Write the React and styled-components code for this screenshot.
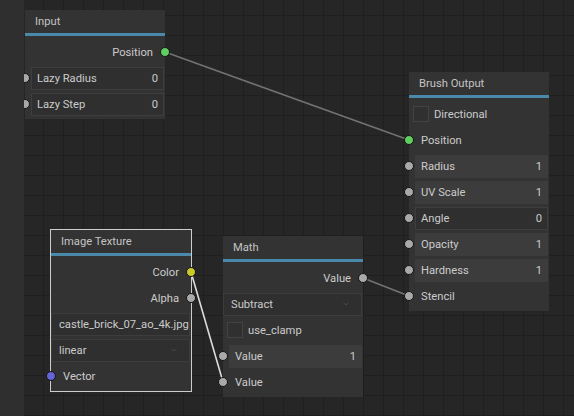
import React from 'react';
import styled, { createGlobalStyle } from 'styled-components';

const GlobalStyle = createGlobalStyle`
  html, body { margin: 0; padding: 0; background: #252525; }
  body { font-family: Roboto, "Liberation Sans", sans-serif; }
  * { box-sizing: border-box; }
`;

const Screen = styled.div`
  display: flex;
  width: 574px;
  height: 416px;
  overflow: hidden;
`;

const Sidebar = styled.aside`
  flex: none;
  width: 24px;
  background: #2f2f2f;
`;

const Canvas = styled.main`
  position: relative;
  flex: 1;
  overflow: hidden;
  background-color: #262626;
  background-image:
    linear-gradient(to right, #1f1f1f 1px, transparent 1px),
    linear-gradient(to bottom, #1f1f1f 1px, transparent 1px);
  background-size: 20px 20px;
  background-position: 19px 15px;
`;

const Links = styled.svg`
  position: absolute;
  inset: 0;
  width: 100%;
  height: 100%;
`;

const NodeBox = styled.section`
  position: absolute;
  left: ${(p) => p.$x}px;
  top: ${(p) => p.$y}px;
  width: ${(p) => (p.$selected ? 142 : 140)}px;
  background: #333333;
  border: ${(p) => (p.$selected ? '1px solid #cdcdcd' : 'none')};
  padding-bottom: 2px;
  color: #cbcbcb;
  font-size: 11.2px;
`;

const Header = styled.header`
  height: 23px;
  display: flex;
  align-items: center;
  padding-left: 10px;
  color: #c4c4c4;
`;

const Bar = styled.div`
  height: 3px;
  background: #4b89aa;
`;

const Body = styled.div`
  display: flex;
  flex-direction: column;
  padding-top: 3px;
`;

const Row = styled.div`
  position: relative;
  height: 26px;
  display: flex;
  align-items: center;
  justify-content: ${(p) => (p.$out ? 'flex-end' : 'flex-start')};
  padding: ${(p) => p.$pad || '0 12px'};
  white-space: nowrap;
`;

const Socket = styled.span`
  position: absolute;
  top: 50%;
  ${(p) => (p.$out ? 'right: -5px;' : 'left: -5px;')}
  width: 10px;
  height: 10px;
  margin-top: -5px;
  border-radius: 50%;
  border: 1px solid #141414;
  background: ${(p) => p.$color || '#a9a9a9'};
`;

const SliderField = styled.div`
  flex: 1;
  min-width: 0;
  height: 23px;
  display: flex;
  align-items: center;
  justify-content: space-between;
  padding: 0 5px;
  border: 1px solid ${(p) => (p.$fill > 0 ? '#3c3c3c' : '#3e3e3e')};
  background: linear-gradient(
    to right,
    #3c3c3c ${(p) => p.$fill * 100}%,
    #2f2f2f ${(p) => p.$fill * 100}%
  );
`;

const BoxField = styled.div`
  flex: 1;
  min-width: 0;
  height: 23px;
  display: flex;
  align-items: center;
  justify-content: space-between;
  padding: 0 1px 0 7px;
  border: 1px solid #3c3c3c;
  background: #2f2f2f;
  overflow: hidden;
`;

const Arrow = styled.svg`
  flex: none;
  margin-right: 11px;
`;

const Check = styled.span`
  width: 16px;
  height: 16px;
  flex: none;
  border: 1px solid #434343;
  background: #303030;
  margin-right: 5px;
`;

const Chevron = () => (
  <Arrow width="6" height="4" viewBox="0 0 6 4">
    <path d="M0.5 0.8 L3 3 L5.5 0.8" fill="none" stroke="#4a4a4a" strokeWidth="1" />
  </Arrow>
);

function Output({ label, color }) {
  return (
    <Row $out>
      {label}
      <Socket $out $color={color} />
    </Row>
  );
}

function Input({ label, color }) {
  return (
    <Row>
      <Socket $color={color} />
      {label}
    </Row>
  );
}

function Slider({ label, value, fill, socket = true }) {
  return (
    <Row $pad="0 1px 0 6px">
      {socket && <Socket />}
      <SliderField $fill={fill}>
        <span>{label}</span>
        <span>{value}</span>
      </SliderField>
    </Row>
  );
}

function Toggle({ label }) {
  return (
    <Row $pad="0 4px">
      <Check />
      {label}
    </Row>
  );
}

function Combo({ value, arrow }) {
  return (
    <Row $pad="0 1px 0 0">
      <BoxField>
        <span>{value}</span>
        {arrow && <Chevron />}
      </BoxField>
    </Row>
  );
}

function Node({ title, x, y, selected, children }) {
  return (
    <NodeBox $x={x} $y={y} $selected={selected}>
      <Header>{title}</Header>
      <Bar />
      <Body>{children}</Body>
    </NodeBox>
  );
}

export default function App() {
  return (
    <>
      <GlobalStyle />
      <Screen>
        <Sidebar />
        <Canvas>
          <Links>
            <line x1="141" y1="52" x2="385" y2="140" stroke="#727272" strokeWidth="1.6" />
            <line x1="339" y1="278" x2="385" y2="296" stroke="#727272" strokeWidth="1.6" />
            <line x1="167" y1="272" x2="199" y2="382" stroke="#dcdcdc" strokeWidth="1.6" />
          </Links>

          <Node title="Input" x={1} y={10}>
            <Output label="Position" color="#5fcd5f" />
            <Slider label="Lazy Radius" value="0" fill={0} />
            <Slider label="Lazy Step" value="0" fill={0} />
          </Node>

          <Node title="Brush Output" x={385} y={72}>
            <Toggle label="Directional" />
            <Input label="Position" color="#5fcd5f" />
            <Slider label="Radius" value="1" fill={1} />
            <Slider label="UV Scale" value="1" fill={1} />
            <Slider label="Angle" value="0" fill={0} />
            <Slider label="Opacity" value="1" fill={1} />
            <Slider label="Hardness" value="1" fill={1} />
            <Input label="Stencil" />
          </Node>

          <Node title="Image Texture" x={26} y={229} selected>
            <Output label="Color" color="#c9c92b" />
            <Output label="Alpha" />
            <Combo value="castle_brick_07_ao_4k.jpg" />
            <Combo value="linear" arrow />
            <Input label="Vector" color="#6464d6" />
          </Node>

          <Node title="Math" x={199} y={236}>
            <Output label="Value" />
            <Combo value="Subtract" arrow />
            <Toggle label="use_clamp" />
            <Slider label="Value" value="1" fill={1} />
            <Input label="Value" />
          </Node>
        </Canvas>
      </Screen>
    </>
  );
}
